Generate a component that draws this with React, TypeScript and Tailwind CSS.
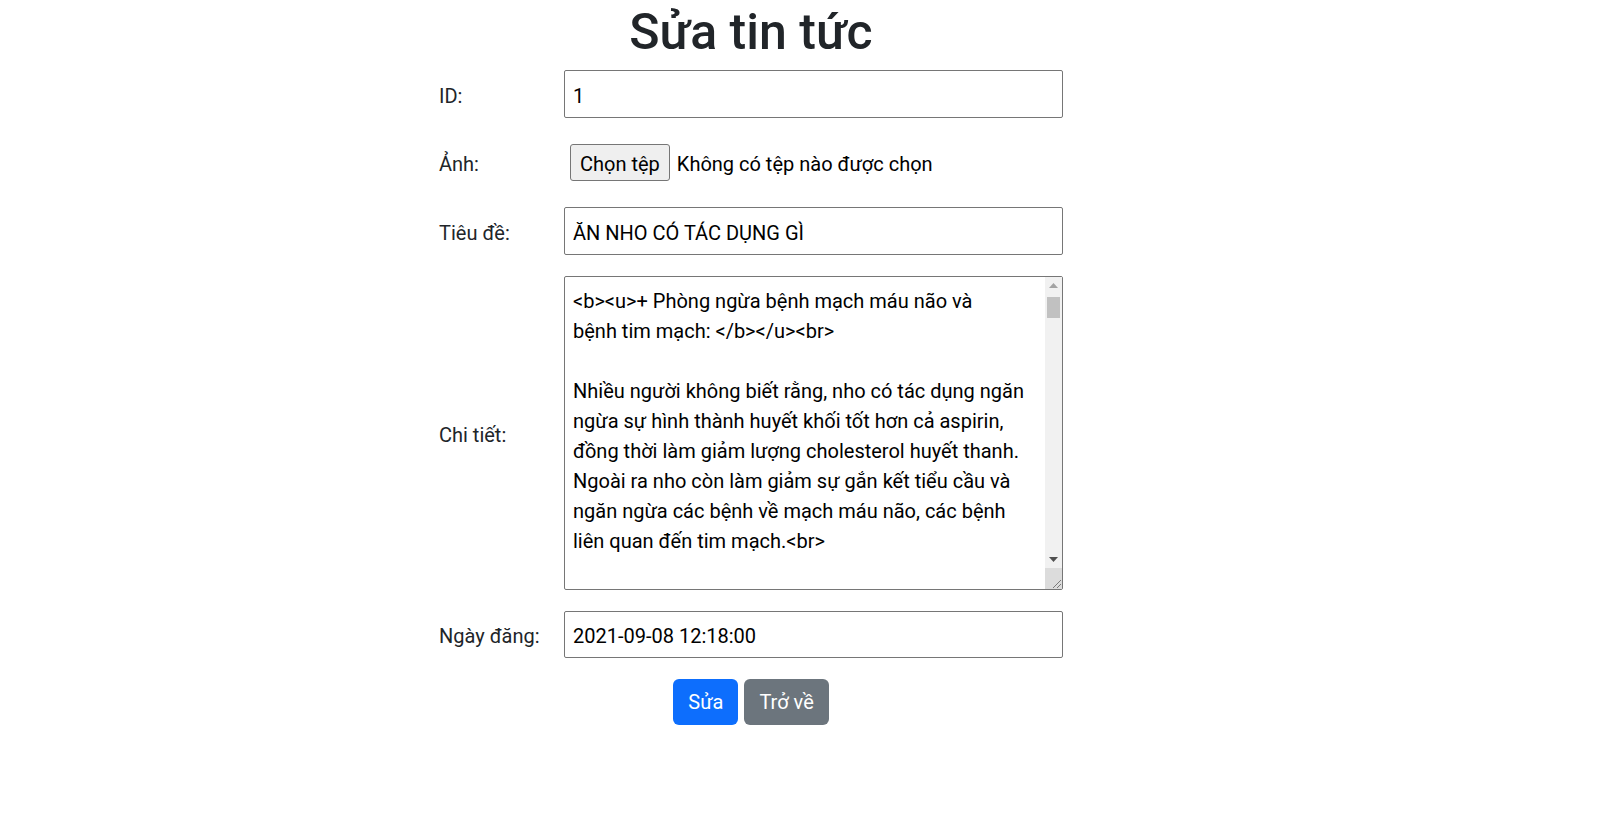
import React from 'react';

const LINES = [
  '<b><u>+ Phòng ngừa bệnh mạch máu não và',
  'bệnh tim mạch: </b></u><br>',
  '',
  'Nhiều người không biết rằng, nho có tác dụng ngăn',
  'ngừa sự hình thành huyết khối tốt hơn cả aspirin,',
  'đồng thời làm giảm lượng cholesterol huyết thanh.',
  'Ngoài ra nho còn làm giảm sự gắn kết tiểu cầu và',
  'ngăn ngừa các bệnh về mạch máu não, các bệnh',
  'liên quan đến tim mạch.<br>',
  '',
];

function Row({ label, children }: { label: string; children: React.ReactNode }) {
  return (
    <div className="flex items-center">
      <label className="w-[125px] shrink-0 pt-[4px]">{label}</label>
      <div className="w-[499px]">{children}</div>
    </div>
  );
}

function TextInput({ value }: { value: string }) {
  return (
    <input
      readOnly
      value={value}
      className="w-full h-[47.5px] border border-[#767676] rounded-[2px] px-[8px] pt-[4px] text-[20px] text-black bg-white outline-none"
    />
  );
}

export default function App() {
  return (
    <div className="min-h-screen bg-white text-[#212529] font-['Roboto',sans-serif] text-[20px] leading-[1.5]">
      <div className="ml-[439px] w-[624px]">
        <h1 className="text-center text-[50px] leading-[60px] font-medium pt-[2px] mb-[8px]">Sửa tin tức</h1>

        <div className="flex flex-col gap-[21px]">
          <Row label="ID:">
            <TextInput value="1" />
          </Row>

          <Row label="Ảnh:">
            <div className="h-[47.5px] flex items-center pl-[6px]">
              <button className="h-[37px] px-[9px] pt-[3px] bg-[#efefef] border border-[#767676] rounded-[3px] text-black">
                Chọn tệp
              </button>
              <span className="ml-[7px] pt-[4px] text-black">Không có tệp nào được chọn</span>
            </div>
          </Row>

          <Row label="Tiêu đề:">
            <TextInput value="ĂN NHO CÓ TÁC DỤNG GÌ" />
          </Row>

          <Row label="Chi tiết:">
            <div className="h-[314px] flex border border-[#767676] rounded-[2px] bg-white">
              <div className="flex-1 overflow-hidden pl-[8px] pt-[9px] text-black">
                {LINES.map((line, i) => (
                  <div key={i} className="h-[30px] whitespace-pre">{line}</div>
                ))}
              </div>
              {/* classic scrollbar */}
              <div className="w-[17px] flex flex-col bg-[#f1f1f1]">
                <div className="h-[17px] flex items-center justify-center">
                  <svg width="9" height="5" viewBox="0 0 9 5"><path d="M0 5 L4.5 0 L9 5 Z" fill="#a3a3a3" /></svg>
                </div>
                <div className="flex-1 px-[2px] pt-[3px]">
                  <div className="h-[21px] bg-[#c1c1c1]" />
                </div>
                <div className="h-[17px] flex items-center justify-center">
                  <svg width="9" height="5" viewBox="0 0 9 5"><path d="M0 0 L9 0 L4.5 5 Z" fill="#505050" /></svg>
                </div>
                <div className="h-[21px] bg-[#dcdcdc] flex items-end justify-end">
                  <svg width="12" height="12" viewBox="0 0 12 12">
                    <path d="M11 3 L3 11 M11 7 L7 11" stroke="#7a7a7a" strokeWidth="1" />
                  </svg>
                </div>
              </div>
            </div>
          </Row>

          <Row label="Ngày đăng:">
            <TextInput value="2021-09-08 12:18:00" />
          </Row>

          <div className="flex justify-center gap-[6px]">
            <button className="h-[46px] px-[15px] bg-[#0d6efd] text-white rounded-[6px]">Sửa</button>
            <button className="h-[46px] px-[15px] bg-[#6c757d] text-white rounded-[6px]">Trở về</button>
          </div>
        </div>
      </div>
    </div>
  );
}
